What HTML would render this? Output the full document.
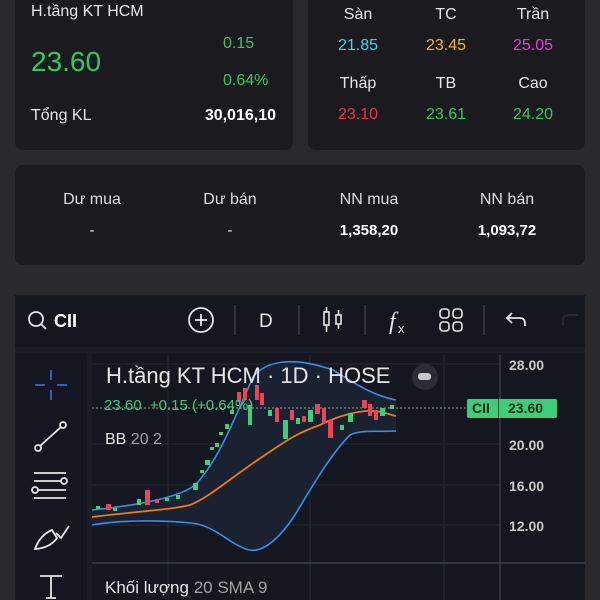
<!DOCTYPE html>
<html><head><meta charset="utf-8"><style>
*{margin:0;padding:0;box-sizing:border-box}
body{width:600px;height:600px;background:#29292e;font-family:"Liberation Sans",sans-serif;color:#e6e6e6;position:relative;overflow:hidden}
.card{position:absolute;background:#1b1b1f;border-radius:8px}
.t{position:absolute;white-space:nowrap}
.c{transform:translateX(-50%)}
.g{color:#2ecc5e}
</style></head><body>
<div class="card" style="left:15px;top:-10px;width:278px;height:160px"></div>
<div class="card" style="left:308px;top:-10px;width:277px;height:160px"></div>
<div class="card" style="left:15px;top:165px;width:570px;height:100px"></div>

<div class="t" style="left:31px;top:3px;font-size:16px">H.tầng KT HCM</div>
<div class="t g" style="left:31px;top:46px;font-size:28px">23.60</div>
<div class="t g" style="left:223px;top:35px;font-size:16px">0.15</div>
<div class="t g" style="left:223px;top:72px;font-size:16px">0.64%</div>
<div class="t" style="left:31px;top:107px;font-size:16px">Tổng KL</div>
<div class="t" style="right:324px;top:107px;font-size:16px;font-weight:bold;color:#fff">30,016,10</div>

<div class="t c" style="left:358px;top:6px;font-size:16px">Sàn</div>
<div class="t c" style="left:446px;top:6px;font-size:16px">TC</div>
<div class="t c" style="left:533px;top:6px;font-size:16px">Trần</div>
<div class="t c" style="left:358px;top:37px;font-size:16px;color:#3bd6e8">21.85</div>
<div class="t c" style="left:446px;top:37px;font-size:16px;color:#f0b43a">23.45</div>
<div class="t c" style="left:533px;top:37px;font-size:16px;color:#e53ae0">25.05</div>
<div class="t c" style="left:358px;top:75px;font-size:16px">Thấp</div>
<div class="t c" style="left:446px;top:75px;font-size:16px">TB</div>
<div class="t c" style="left:533px;top:75px;font-size:16px">Cao</div>
<div class="t c" style="left:358px;top:106px;font-size:16px;color:#e8344e">23.10</div>
<div class="t c g" style="left:446px;top:106px;font-size:16px">23.61</div>
<div class="t c g" style="left:533px;top:106px;font-size:16px">24.20</div>

<div class="t c" style="left:92px;top:191px;font-size:16px;color:#ddd">Dư mua</div>
<div class="t c" style="left:230px;top:191px;font-size:16px;color:#ddd">Dư bán</div>
<div class="t c" style="left:369px;top:191px;font-size:16px;color:#ddd">NN mua</div>
<div class="t c" style="left:507px;top:191px;font-size:16px;color:#ddd">NN bán</div>
<div class="t c" style="left:92px;top:222px;font-size:15px">-</div>
<div class="t c" style="left:230px;top:222px;font-size:15px">-</div>
<div class="t c" style="left:369px;top:222px;font-size:15px;font-weight:bold;color:#fff">1,358,20</div>
<div class="t c" style="left:507px;top:222px;font-size:15px;font-weight:bold;color:#fff">1,093,72</div>

<div style="position:absolute;left:15px;top:295px;width:570px;height:305px;background:#1a1d26"></div>
<div style="position:absolute;left:15px;top:295px;width:570px;height:52px;background:#141720"></div>
<div style="position:absolute;left:15px;top:353px;width:72px;height:247px;background:#141720"></div>
<div style="position:absolute;left:92px;top:353px;width:493px;height:247px;background:#141720"></div>

<svg width="600" height="600" style="position:absolute;left:0;top:0" fill="none" stroke="#e6e6e6" stroke-width="1.8">
<circle cx="36" cy="319" r="7"/><line x1="41" y1="324" x2="46" y2="329"/>
<text x="54" y="327" fill="#fff" stroke="none" font-size="18" font-weight="bold" font-family="Liberation Sans">CII</text>
<circle cx="201" cy="320" r="12"/><line x1="195" y1="320" x2="207" y2="320"/><line x1="201" y1="314" x2="201" y2="326"/>
<g stroke="#3a3d48" stroke-width="1.5"><line x1="235" y1="305" x2="235" y2="335"/><line x1="299" y1="305" x2="299" y2="335"/><line x1="365" y1="305" x2="365" y2="335"/><line x1="484" y1="305" x2="484" y2="335"/></g>
<text x="259" y="327" fill="#e6e6e6" stroke="none" font-size="19" font-family="Liberation Sans">D</text>
<g stroke-width="1.6"><rect x="324" y="312" width="5" height="13"/><line x1="326.5" y1="307" x2="326.5" y2="312"/><line x1="326.5" y1="325" x2="326.5" y2="332"/><rect x="336" y="315" width="5" height="9"/><line x1="338.5" y1="310" x2="338.5" y2="315"/><line x1="338.5" y1="324" x2="338.5" y2="329"/></g>
<text x="389" y="329" fill="#e6e6e6" stroke="none" font-size="24" font-style="italic" font-family="Liberation Serif">f</text>
<text x="398" y="333" fill="#e6e6e6" stroke="none" font-size="13" font-family="Liberation Sans">x</text>
<g stroke-width="1.6"><rect x="440" y="309" width="9" height="9" rx="3"/><rect x="453" y="309" width="9" height="9" rx="3"/><rect x="440" y="322" width="9" height="9" rx="3"/><rect x="453" y="322" width="9" height="9" rx="3"/></g>
<path d="M512 313 L507 318 L512 323 M507 318 H520 Q525 318 525 324 V326"/>
<path d="M563 325 V320 Q563 315 570 315 H578" stroke="#2a2d36"/>
<g stroke="#3d5fd6" stroke-width="1.8"><line x1="51" y1="370" x2="51" y2="380"/><line x1="51" y1="390" x2="51" y2="400"/><line x1="35" y1="385" x2="45" y2="385"/><line x1="57" y1="385" x2="67" y2="385"/></g>
<circle cx="38" cy="448" r="3"/><circle cx="63" cy="425" r="3"/><line x1="40" y1="446" x2="61" y2="427"/>
<line x1="34" y1="473" x2="66" y2="473"/><line x1="34" y1="481" x2="61" y2="481"/><circle cx="64" cy="481" r="3"/><line x1="38" y1="490" x2="66" y2="490"/><circle cx="35" cy="490" r="3"/><line x1="34" y1="498" x2="66" y2="498"/>
<path d="M35 549 Q40 535 52 530 L57 538 Q50 548 35 549 Z M56 533 L61 538 L69 526"/>
<path d="M40 576 H62 M51 576 V598 M46 598 H56"/>
<g stroke="#262a35" stroke-width="1.2"><line x1="168" y1="355" x2="168" y2="600"/><line x1="310" y1="355" x2="310" y2="600"/><line x1="444" y1="355" x2="444" y2="600"/>
<line x1="92" y1="444" x2="500" y2="444"/><line x1="92" y1="485" x2="500" y2="485"/><line x1="92" y1="525" x2="500" y2="525"/><line x1="92" y1="364" x2="500" y2="364"/></g>
<line x1="500" y1="355" x2="500" y2="600" stroke="#4a4e5a" stroke-width="1"/>
<line x1="92" y1="563" x2="585" y2="563" stroke="#3a3e4a" stroke-width="1.5"/>
<path d="M92 510 C140 505 180 497 195 485 C215 465 230 430 253 377 C265 362 290 355 333 370 C350 380 370 395 396 400 L396 431 C370 432 360 430 350 435 C330 455 310 490 295 515 C275 545 260 552 249 550 C230 545 215 525 191 523 C160 520 120 520 92 525 Z" fill="#1a2232" stroke="none"/>
<path d="M92 510 C140 505 180 497 195 485 C215 465 230 430 253 377 C265 362 290 355 333 370 C350 380 370 395 396 400" stroke="#3a8ee6" stroke-width="1.6"/>
<path d="M92 525 C120 520 160 520 191 523 C215 525 230 545 249 550 C260 552 275 545 295 515 C310 490 330 455 350 435 C360 430 370 432 396 431" stroke="#3a8ee6" stroke-width="1.6"/>
<path d="M92 517 C130 512 170 510 190 505 C210 497 230 478 268 453 C290 438 300 432 320 425 C340 415 360 410 375 411 C385 412 390 415 396 416" stroke="#f07a1a" stroke-width="1.8"/>
<line x1="92" y1="408" x2="467" y2="408" stroke="#8a9a8a" stroke-width="1" stroke-dasharray="2 2"/>
<g stroke="none">
<g fill="#3ccf78">
<rect x="96" y="506" width="4" height="3"/><rect x="113" y="508" width="4" height="3"/><rect x="137" y="499" width="4" height="6"/><rect x="165" y="498" width="4" height="3"/><rect x="176" y="495" width="4" height="4"/><rect x="193" y="483" width="5" height="7"/><rect x="200" y="470" width="4" height="3"/><rect x="205" y="460" width="5" height="5"/><rect x="210" y="447" width="4" height="3"/><rect x="215" y="443" width="4" height="4"/><rect x="219" y="432" width="4" height="3"/><rect x="225" y="424" width="4" height="5"/><rect x="230" y="410" width="4" height="4"/><rect x="248" y="405" width="4" height="20"/><rect x="268" y="410" width="4" height="6"/><rect x="283" y="420" width="5" height="19"/><rect x="296" y="418" width="4" height="6"/><rect x="308" y="410" width="5" height="12"/><rect x="340" y="425" width="4" height="5"/><rect x="348" y="413" width="5" height="9"/><rect x="380" y="408" width="5" height="8"/><rect x="390" y="405" width="4" height="4"/>
</g>
<g fill="#e8445a">
<rect x="106" y="504" width="5" height="6"/><rect x="145" y="490" width="5" height="15"/><rect x="155" y="499" width="4" height="4"/><rect x="237" y="392" width="4" height="10"/><rect x="243" y="388" width="4" height="12"/><rect x="255" y="385" width="4" height="15"/><rect x="260" y="393" width="4" height="12"/><rect x="275" y="408" width="4" height="14"/><rect x="290" y="410" width="4" height="10"/><rect x="302" y="416" width="4" height="6"/><rect x="315" y="404" width="5" height="10"/><rect x="322" y="408" width="4" height="15"/><rect x="328" y="420" width="5" height="18"/><rect x="362" y="400" width="5" height="8"/><rect x="368" y="404" width="4" height="12"/><rect x="374" y="410" width="4" height="10"/>
</g></g>
</svg>

<div class="t" style="left:106px;top:363px;font-size:22px;color:#e6e6e6">H.tầng KT HCM · 1D · HOSE</div>
<div style="position:absolute;left:412px;top:364px;width:26px;height:26px;border-radius:13px;background:#2a2d38"></div>
<div style="position:absolute;left:418px;top:373px;width:13px;height:7px;border-radius:3px;background:#c8c8c8"></div>
<div class="t" style="left:104px;top:397px;font-size:15px;color:#3ccf78">23.60 &nbsp;+0.15 (+0.64%)</div>
<div class="t" style="left:105px;top:431px;font-size:16px;color:#e6e6e6">BB <span style="color:#a0a0a0">20 2</span></div>
<div class="t" style="left:105px;top:578px;font-size:17px;color:#e6e6e6">Khối lượng <span style="color:#a0a0a0">20 SMA 9</span></div>

<div style="position:absolute;left:467px;top:399px;width:90px;height:19px;background:#3ccf78;border-radius:2px"></div>
<div style="position:absolute;left:498px;top:399px;width:1px;height:19px;background:#1a5a35"></div>
<div class="t" style="left:472px;top:400px;font-size:14px;font-weight:bold;color:#0d2a18">CII</div>
<div class="t" style="left:508px;top:400px;font-size:14px;font-weight:bold;color:#0d2a18">23.60</div>

<div class="t" style="left:509px;top:357px;font-size:14px;font-weight:bold;color:#c8c8c8">28.00</div>
<div class="t" style="left:509px;top:437px;font-size:14px;font-weight:bold;color:#c8c8c8">20.00</div>
<div class="t" style="left:509px;top:478px;font-size:14px;font-weight:bold;color:#c8c8c8">16.00</div>
<div class="t" style="left:509px;top:518px;font-size:14px;font-weight:bold;color:#c8c8c8">12.00</div>
</body></html>
